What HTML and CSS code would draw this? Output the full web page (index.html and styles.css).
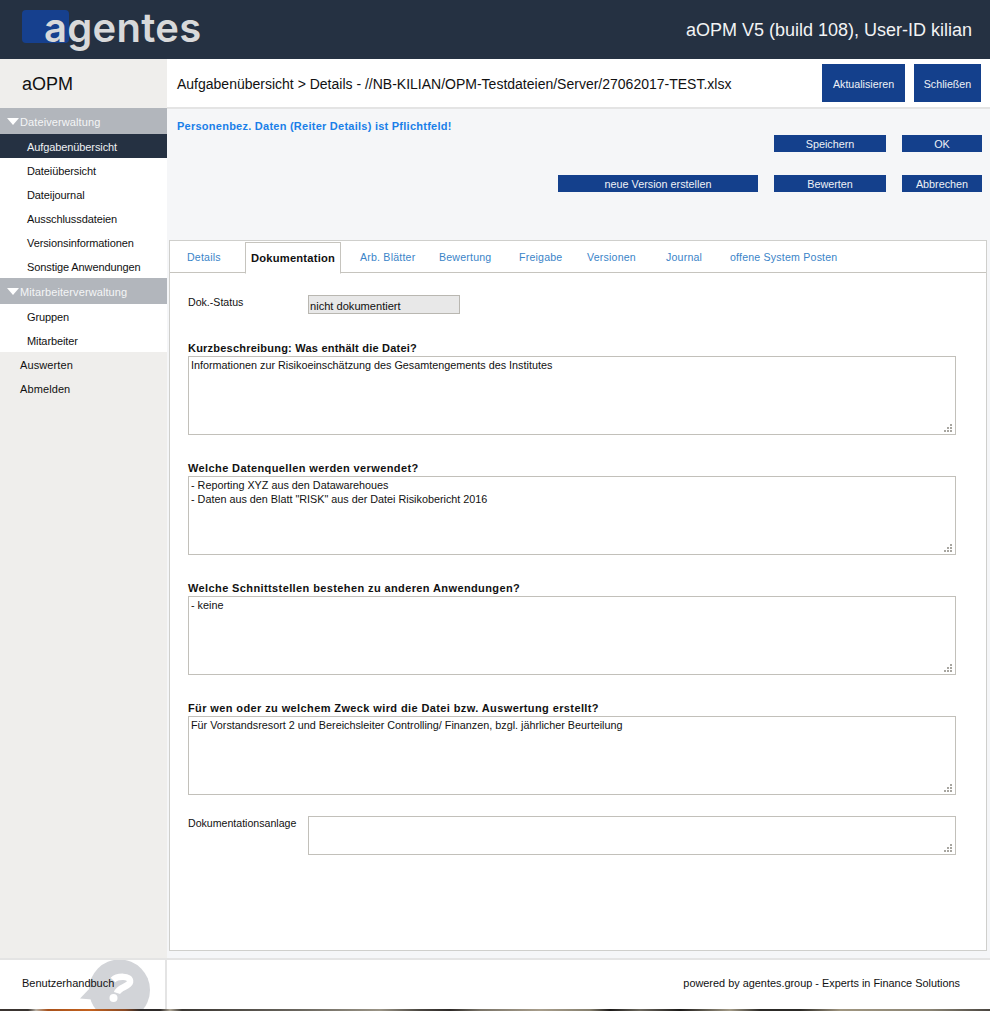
FILE: index.html
```html
<!DOCTYPE html>
<html lang="de">
<head>
<meta charset="utf-8">
<title>aOPM</title>
<link rel="stylesheet" href="styles.css">
</head>
<body>
<div class="app">
  <header class="top">
    <div class="logo"><span class="logo-box"></span><span class="logo-text">agentes</span></div>
    <div class="top-info">aOPM V5 (build 108), User-ID kilian</div>
  </header>
  <div class="middle">
    <aside class="side">
      <div class="brand">aOPM</div>
      <div class="group"><span class="tri"></span>Dateiverwaltung</div>
      <ul class="sub">
        <li class="active">Aufgabenübersicht</li>
        <li>Dateiübersicht</li>
        <li>Dateijournal</li>
        <li>Ausschlussdateien</li>
        <li>Versionsinformationen</li>
        <li>Sonstige Anwendungen</li>
      </ul>
      <div class="group"><span class="tri"></span>Mitarbeiterverwaltung</div>
      <ul class="sub">
        <li>Gruppen</li>
        <li>Mitarbeiter</li>
      </ul>
      <div class="plain">Auswerten</div>
      <div class="plain">Abmelden</div>
    </aside>
    <main class="main">
      <div class="titlebar">
        <h1 class="crumb">Aufgabenübersicht &gt; Details - //NB-KILIAN/OPM-Testdateien/Server/27062017-TEST.xlsx</h1>
        <button class="btn big w-akt">Aktualisieren</button>
        <button class="btn big w-sch">Schließen</button>
      </div>
      <div class="actions">
        <p class="notice">Personenbez. Daten (Reiter Details) ist Pflichtfeld!</p>
        <div class="row row1">
          <button class="btn small w-mid">Speichern</button>
          <button class="btn small w-end">OK</button>
        </div>
        <div class="row row2">
          <button class="btn small w-wide">neue Version erstellen</button>
          <button class="btn small w-mid">Bewerten</button>
          <button class="btn small w-end">Abbrechen</button>
        </div>
      </div>
      <section class="panel">
        <nav class="tabs">
          <span class="tab t1">Details</span>
          <span class="tab sel">Dokumentation</span>
          <span class="tab t3">Arb. Blätter</span>
          <span class="tab t4">Bewertung</span>
          <span class="tab t5">Freigabe</span>
          <span class="tab t6">Versionen</span>
          <span class="tab t7">Journal</span>
          <span class="tab t8">offene System Posten</span>
        </nav>
        <div class="form">
          <div class="status-row">
            <span class="lbl">Dok.-Status</span>
            <span class="status">nicht dokumentiert</span>
          </div>
          <label class="head first">Kurzbeschreibung: Was enthält die Datei?</label>
          <textarea class="area">Informationen zur Risikoeinschätzung des Gesamtengements des Institutes</textarea>
          <label class="head">Welche Datenquellen werden verwendet?</label>
          <textarea class="area">- Reporting XYZ aus den Datawarehoues
- Daten aus den Blatt "RISK" aus der Datei Risikobericht 2016</textarea>
          <label class="head">Welche Schnittstellen bestehen zu anderen Anwendungen?</label>
          <textarea class="area">- keine</textarea>
          <label class="head">Für wen oder zu welchem Zweck wird die Datei bzw. Auswertung erstellt?</label>
          <textarea class="area">Für Vorstandsresort 2 und Bereichsleiter Controlling/ Finanzen, bzgl. jährlicher Beurteilung</textarea>
          <div class="attach-row">
            <span class="lbl">Dokumentationsanlage</span>
            <textarea class="area attach"></textarea>
          </div>
        </div>
      </section>
    </main>
  </div>
  <footer class="foot">
    <div class="foot-left">
      <svg class="help" width="72" height="52" viewBox="0 0 72 52" aria-hidden="true">
        <circle cx="41.5" cy="31" r="30.5" fill="#d2d4d8"/>
        <path d="M2 39.5L14 27 24 41 20 41z" fill="#d2d4d8"/>
        <path d="M35 21C39 17 53 16 52 23C51 28 41 28 39 34" fill="none" stroke="#fff" stroke-width="6.5"/>
        <circle cx="35.5" cy="39" r="4" fill="#fff"/>
      </svg>
      <span class="foot-link">Benutzerhandbuch</span>
    </div>
    <div class="foot-right">powered by agentes.group - Experts in Finance Solutions</div>
  </footer>
  <div class="strip"></div>
</div>
</body>
</html>
```
FILE: styles.css
```css
* { box-sizing: border-box; }
html, body { margin: 0; padding: 0; height: 100%; }
body { font-family: "Liberation Sans", Arial, sans-serif; font-size: 12px; color: #111; background: #fff; overflow: hidden; }
.app { width: 990px; height: 1011px; display: flex; flex-direction: column; }

.top { height: 59px; flex: none; background: #253142; display: flex; justify-content: space-between; align-items: center; padding: 0 18px 0 22px; }
.logo { position: relative; width: 182px; height: 47px; margin-top: 10px; align-self: flex-start; }
.logo-box { position: absolute; left: 0; top: 0; width: 47px; height: 33px; border-radius: 4px; background: #16408e; }
.logo-text { position: absolute; left: 22px; top: -6px; font-family: Inter, sans-serif; font-weight: 600; font-size: 40px; line-height: 48px; letter-spacing: 0.3px; color: #d8d9da; }
.top-info { color: #f2f3f4; font-size: 18px; margin-top: 1px; }

.middle { flex: 1; display: flex; min-height: 0; }
.side { width: 167px; flex: none; background: #efeeec; }
.brand { height: 49px; padding: 15px 0 0 22px; font-size: 18px; line-height: 21px; color: #111; }
.group { height: 26px; background: #b2b6bc; color: #f4f5f6; padding: 2px 0 0 7px; display: flex; align-items: center; font-size: 11px; letter-spacing: 0.1px; }
.tri { width: 0; height: 0; border-left: 6px solid transparent; border-right: 6px solid transparent; border-top: 7px solid #fff; margin: -2px 1px 0 0; }
.sub { list-style: none; margin: 0; padding: 0; background: #fff; }
.sub li { height: 24px; line-height: 26px; padding-left: 27px; font-size: 11px; letter-spacing: -0.1px; color: #111; }
.sub li.active { background: #253142; color: #eef0f2; }
.plain { height: 24px; line-height: 26px; padding-left: 20px; font-size: 11px; letter-spacing: 0.1px; }

.main { flex: 1; background: #f5f6f8; display: flex; flex-direction: column; min-width: 0; }
.titlebar { height: 50px; flex: none; background: #fff; border-bottom: 2px solid #e4e4e4; display: flex; align-items: flex-start; padding: 5px 9px 0 10px; }
.crumb { margin: 0 auto 0 0; font-weight: 400; font-size: 14px; line-height: 40px; color: #111; white-space: nowrap; }
.btn { border: 0; margin: 0; padding: 0; background: #14408c; color: #eef1f6; font-family: inherit; font-size: 10.8px; text-align: center; }
.big { height: 38px; padding-top: 2px; font-size: 10.7px; }
.w-akt { width: 83px; margin-right: 9px; }
.w-sch { width: 67px; }
.small { height: 17px; padding-top: 2px; line-height: 15px; }
.w-mid { width: 112px; }
.w-end { width: 80px; margin-left: 16px; }
.w-wide { width: 200px; margin-right: 0; }

.actions { height: 131px; flex: none; padding: 0 8px 0 10px; position: relative; }
.notice { margin: 0; padding-top: 10px; font-size: 11px; line-height: 14px; font-weight: 700; color: #1a7fe8; letter-spacing: 0.25px; }
.row { display: flex; justify-content: flex-end; }
.row1 { margin-top: 2px; }
.row2 { margin-top: 23px; }
.row2 .w-mid { margin-left: 16px; }

.panel { flex: none; width: 818px; height: 711px; margin-left: 2px; background: #fff; border: 1px solid #cfcfcc; display: flex; flex-direction: column; }
.tabs { height: 32px; flex: none; display: flex; border-bottom: 1px solid #c6c4be; font-size: 10.6px; color: #3a84c8; letter-spacing: 0.2px; }
.tab { line-height: 32px; white-space: nowrap; flex: none; }
.t1 { width: 75px; padding-left: 17px; }
.sel { height: 32px; margin-top: 1px; width: 96px; background: #fff; border: 1px solid #c6c4be; border-bottom-color: #fff; color: #111; font-weight: 700; font-size: 11.2px; padding-left: 5px; line-height: 30px; }
.t3 { width: 98px; padding-left: 19px; }
.t4 { width: 80px; }
.t5 { width: 68px; }
.t6 { width: 79px; }
.t7 { width: 64px; }
.form { padding: 22px 0 0 18px; }
.status-row { display: flex; height: 19px; }
.lbl { width: 120px; flex: none; font-size: 10.6px; line-height: 14px; color: #111; }
.status { width: 152px; height: 19px; background: #e8e8e8; border: 1px solid #b9b7b1; padding-left: 1px; font-size: 11.1px; line-height: 20px; color: #111; }
.head { display: block; margin-top: 25px; height: 16px; font-size: 11px; line-height: 16px; font-weight: 700; color: #111; letter-spacing: 0.39px; }
.head.first { margin-top: 26px; letter-spacing: 0.22px; }
.area { display: block; width: 768px; height: 79px; margin: 0; padding: 1px 2px; border: 1px solid #c2c0ba; border-radius: 0; background: #fff; font-family: "Liberation Sans", Arial, sans-serif; font-size: 10.8px; line-height: 14px; color: #111; outline: 0; }
.area::-webkit-resizer { background: url("data:image/svg+xml,%3Csvg xmlns='http://www.w3.org/2000/svg' width='15' height='15'%3E%3Cpath fill='%23a8a6a0' d='M10 5h2v2h-2zM7 8h2v2H7zM10 8h2v2h-2zM4 11h2v2H4zM7 11h2v2H7zM10 11h2v2h-2z'/%3E%3C/svg%3E") no-repeat right bottom; }
.attach-row { display: flex; margin-top: 21px; }
.attach { width: 648px; height: 39px; }

.foot { height: 51px; flex: none; display: flex; background: #fff; border-top: 2px solid #e4e4e4; position: relative; }
.foot-left { width: 167px; flex: none; border-right: 2px solid #e4e4e4; position: relative; overflow: hidden; padding: 16px 0 0 22px; line-height: 14px; }
.help { position: absolute; left: 78px; top: -1px; }
.foot-link { position: relative; font-size: 11px; line-height: 14px; color: #111; }
.foot-right { flex: 1; text-align: right; padding: 16px 30px 0 0; font-size: 10.9px; line-height: 14px; color: #111; }
.strip { height: 2px; flex: none; background: linear-gradient(90deg, #3a3430 0, #3a3430 28px, #b8b0a4 36px, #a8521c 48px, #c4621e 90px, #8a4a24 125px, #2e2a28 140px, #2e2a28 160px, #b0a898 170px, #3a3632 182px, #6a665e 300px, #9a9486 380px, #4a4640 420px, #2e2a28 450px, #7a7468 480px, #a89e8c 540px, #86806e 590px, #1c1a18 610px, #6e6a60 640px, #1c1a18 680px, #a49c88 730px, #2c2a26 760px, #2c2a26 800px, #a09680 840px, #8a8474 930px, #4a4640 990px); }
```
